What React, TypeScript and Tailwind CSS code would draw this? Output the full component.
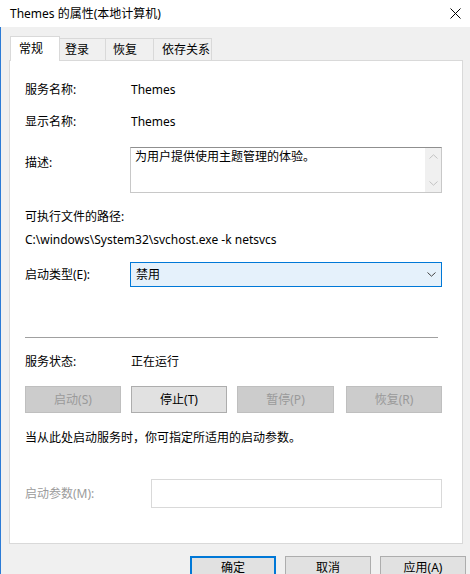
const font = { fontFamily: '"Noto Sans", "Noto Sans CJK SC", sans-serif' }

function Btn({ label, disabled, focused, className = "" }: { label: string; disabled?: boolean; focused?: boolean; className?: string }) {
  return (
    <div
      className={
        "flex items-center justify-center text-[12px] " +
        (disabled
          ? "bg-[#cccccc] border border-[#bfbfbf] text-[#9a9a9a] "
          : focused
          ? "bg-[#e1e1e1] border-2 border-[#0078d7] text-black "
          : "bg-[#e1e1e1] border border-[#adadad] text-black ") +
        className
      }
    >
      {label}
    </div>
  )
}

function Chevron({ up, color }: { up?: boolean; color: string }) {
  return (
    <svg width="9" height="5" viewBox="0 0 9 5" fill="none">
      <path d={up ? "M0.5 4.5L4.5 0.8L8.5 4.5" : "M0.5 0.5L4.5 4.2L8.5 0.5"} stroke={color} strokeWidth="1" />
    </svg>
  )
}

export default function App() {
  return (
    <div className="w-[470px] h-[574px] overflow-hidden bg-[#f0f0f0] text-black" style={font}>
      {/* title bar */}
      <div className="h-[27px] bg-white flex items-center justify-between pl-[10px] pr-[8px]">
        <span className="text-[12px] leading-none">Themes 的属性(本地计算机)</span>
        <svg width="11" height="11" viewBox="0 0 11 11" className="mr-[1px]">
          <path d="M0.5 0.5L10.5 10.5M10.5 0.5L0.5 10.5" stroke="#000" strokeWidth="1" />
        </svg>
      </div>

      <div className="border-l border-[#2b7bd6] h-[547px] pl-[8px]">
        {/* tabs */}
        <div className="flex items-end pt-[9px] pl-[1px] text-[12px]">
          <div className="relative z-10 -mb-px h-[25px] w-[50px] bg-white border border-b-0 border-[#d9d9d9] pl-[8px] pt-[3px]">
            常规
          </div>
          <div className="h-[22px] w-[46px] border border-l-0 border-b-0 border-[#d9d9d9] pl-[5px] pt-[2px]">登录</div>
          <div className="h-[22px] w-[48px] border border-l-0 border-b-0 border-[#d9d9d9] pl-[7px] pt-[2px]">恢复</div>
          <div className="h-[22px] w-[58px] border border-l-0 border-b-0 border-[#d9d9d9] pl-[8px] pt-[2px]">依存关系</div>
        </div>

        {/* panel */}
        <div className="w-[454px] bg-white border border-[#d9d9d9] pl-[15px] pr-[20px] pt-[21px] pb-[35px] text-[12px] leading-[16px]">
          <div className="flex">
            <span className="w-[106px]">服务名称:</span>
            <span>Themes</span>
          </div>
          <div className="flex mt-[16px]">
            <span className="w-[106px]">显示名称:</span>
            <span>Themes</span>
          </div>
          <div className="flex mt-[17px]">
            <span className="w-[105px] pt-[8px]">描述:</span>
            <div className="flex-1 h-[46px] flex border border-[#c8c8c8] border-t-[#8f8f8f]">
              <div className="flex-1 pl-[4px] pt-[1px]">为用户提供使用主题管理的体验。</div>
              <div className="w-[16px] bg-[#f0f0f0] flex flex-col items-center justify-between py-[6px]">
                <Chevron up color="#c2c2c2" />
                <Chevron color="#c2c2c2" />
              </div>
            </div>
          </div>
          <div className="mt-[16px]">可执行文件的路径:</div>
          <div className="mt-[7px]">C:\windows\System32\svchost.exe -k netsvcs</div>
          <div className="flex items-center mt-[14px]">
            <span className="w-[105px]">启动类型(E):</span>
            <div className="flex-1 h-[25px] bg-[#e5f1fb] border border-[#0078d7] flex items-center justify-between pl-[5px] pr-[5px]">
              <span>禁用</span>
              <Chevron color="#444" />
            </div>
          </div>
          <div className="mt-[50px] mr-[4px] h-px bg-[#a0a0a0]" />
          <div className="flex mt-[16px]">
            <span className="w-[106px]">服务状态:</span>
            <span>正在运行</span>
          </div>
          <div className="flex mt-[16px] gap-[10px]">
            <Btn label="启动(S)" disabled className="w-[96px] h-[27px]" />
            <Btn label="停止(T)" className="w-[96px] h-[27px]" />
            <Btn label="暂停(P)" disabled className="w-[97px] h-[27px]" />
            <Btn label="恢复(R)" disabled className="w-[96px] h-[27px] ml-[2px]" />
          </div>
          <div className="mt-[17px]">当从此处启动服务时，你可指定所适用的启动参数。</div>
          <div className="flex items-center mt-[33px]">
            <span className="w-[126px] text-[#9b9b9b]">启动参数(M):</span>
            <div className="flex-1 h-[29px] border border-[#d9d9d9] bg-white" />
          </div>
        </div>

        {/* bottom buttons */}
        <div className="flex mt-[12px] pl-[181px] gap-[9px]">
          <Btn label="确定" focused className="w-[86px] h-[24px]" />
          <Btn label="取消" className="w-[86px] h-[24px]" />
          <Btn label="应用(A)" className="w-[86px] h-[24px]" />
        </div>
      </div>
    </div>
  )
}
